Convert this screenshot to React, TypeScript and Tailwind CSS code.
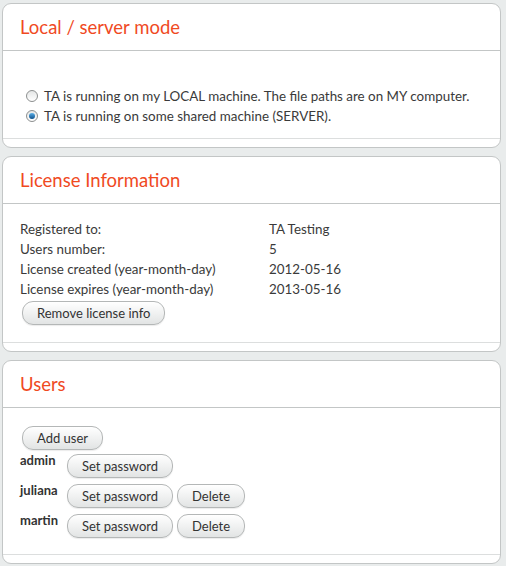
const Btn = ({ children, className = "" }: { children: React.ReactNode; className?: string }) => (
  <button
    className={
      "h-[24px] rounded-[11px] border border-[#b4b7b7] bg-gradient-to-b from-[#ffffff] to-[#e2e4e4] px-[14px] text-[13px] leading-none text-[#333] shadow-[0_1px_1px_rgba(0,0,0,0.08)] " +
      className
    }
  >
    {children}
  </button>
);

const Panel = ({
  title,
  children,
  className = "",
}: {
  title: string;
  children: React.ReactNode;
  className?: string;
}) => (
  <div className={"ml-[2px] w-[499px] rounded-[9px] border border-[#c3c6c6] bg-white " + className}>
    <div className="flex h-[47px] items-center border-b border-[#c3c6c6] px-[17px]">
      <h2 className="pt-[1px] text-[18.5px] leading-none text-[#f04a1f]">{title}</h2>
    </div>
    {children}
    <div className="h-[9px] border-t border-[#dcdede]" />
  </div>
);

const Radio = ({ checked }: { checked?: boolean }) => (
  <span className="mr-[6px] inline-flex h-[12px] w-[12px] items-center justify-center rounded-full border border-[#8c8f8f] bg-gradient-to-b from-[#e4e6e6] to-[#ffffff]">
    {checked && (
      <span className="h-[6px] w-[6px] rounded-full bg-gradient-to-b from-[#5ab0e8] to-[#0a4f8a]" />
    )}
  </span>
);

const users = [
  { name: "admin", canDelete: false },
  { name: "juliana", canDelete: true },
  { name: "martin", canDelete: true },
];

const license = [
  ["Registered to:", "TA Testing"],
  ["Users number:", "5"],
  ["License created (year-month-day)", "2012-05-16"],
  ["License expires (year-month-day)", "2013-05-16"],
];

export default function App() {
  return (
    <div
      className="min-h-screen bg-[#e9ecec] pt-[3px] text-[13.4px] text-[#3a3a3a]"
      style={{ fontFamily: "Lato, 'Open Sans', sans-serif" }}
    >
      <Panel title="Local / server mode">
        <div className="px-[23px] pb-[12px] pt-[35px]">
          <label className="flex h-[20px] items-center">
            <Radio />
            TA is running on my LOCAL machine. The file paths are on MY computer.
          </label>
          <label className="flex h-[20px] items-center">
            <Radio checked />
            TA is running on some shared machine (SERVER).
          </label>
        </div>
      </Panel>

      <Panel title="License Information" className="mt-[8px]">
        <div className="px-[17px] pb-[17px] pt-[15px]">
          {license.map(([k, v]) => (
            <div key={k} className="flex h-[20px] items-center">
              <div className="w-[249px]">{k}</div>
              <div>{v}</div>
            </div>
          ))}
          <Btn className="ml-[2px] mt-[2px]">Remove license info</Btn>
        </div>
      </Panel>

      <Panel title="Users" className="mt-[8px]">
        <div className="px-[17px] pb-[16px] pt-[18px]">
          <Btn className="ml-[2px]">Add user</Btn>
          <div className="mt-[4px] flex flex-col gap-[6px]">
            {users.map((u) => (
              <div key={u.name} className="flex items-start">
                <div className="-mt-[2px] w-[47px] text-[13px] leading-[16px] font-bold text-[#333]">{u.name}</div>
                <div className="flex gap-[4px]">
                  <Btn>Set password</Btn>
                  {u.canDelete && <Btn>Delete</Btn>}
                </div>
              </div>
            ))}
          </div>
        </div>
      </Panel>
    </div>
  );
}
